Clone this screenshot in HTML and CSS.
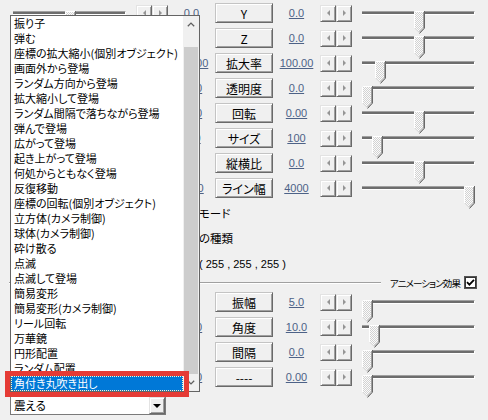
FILE: index.html
```html
<!DOCTYPE html>
<html lang="ja">
<head>
<meta charset="utf-8">
<title>設定ダイアログ</title>
<link rel="stylesheet" href="styles.css">
</head>
<body>
<svg class="defs" width="0" height="0" aria-hidden="true">
  <defs>
    <pattern id="dots" width="2" height="2" patternUnits="userSpaceOnUse">
      <rect width="2" height="2" fill="#fbfbfb"/>
      <rect width="1" height="1" fill="#d2d2d2"/>
      <rect x="1" y="1" width="1" height="1" fill="#d2d2d2"/>
    </pattern>
    <symbol id="th" viewBox="0 0 11 23">
      <polygon points="0,0 11,0 11,17 5.5,22.5 0,17" fill="url(#dots)"/>
      <polyline points="0.5,17.2 0.5,0.5 10,0.5" fill="none" stroke="#ffffff"/>
      <line x1="0.5" y1="17.2" x2="5.3" y2="22" stroke="#e3e3e3"/>
      <polyline points="9.5,1 9.5,17 5.5,21" fill="none" stroke="#a0a0a0"/>
      <polyline points="10.5,0 10.5,17.2 5.5,22.5" fill="none" stroke="#696969"/>
    </symbol>
  </defs>
</svg>

<div class="panel">
  <div class="row">
    <div class="slider"><div class="sl"><div class="track"></div><svg class="thumb" style="left:52px"><use href="#th"/></svg></div></div>
    <div class="arrows"><span class="ab"><i class="tri l"></i></span><span class="ab"><i class="tri r"></i></span></div>
    <span class="val">0.0</span>
    <button class="btn">Y</button>
    <span class="val">0.0</span>
    <div class="arrows"><span class="ab"><i class="tri l"></i></span><span class="ab"><i class="tri r"></i></span></div>
    <div class="slider r"><div class="sl"><div class="track"></div><svg class="thumb" style="left:52px"><use href="#th"/></svg></div></div>
  </div>
  <div class="row">
    <div class="slider"><div class="sl"><div class="track"></div><svg class="thumb" style="left:52px"><use href="#th"/></svg></div></div>
    <div class="arrows"><span class="ab"><i class="tri l"></i></span><span class="ab"><i class="tri r"></i></span></div>
    <span class="val">0.0</span>
    <button class="btn">Z</button>
    <span class="val">0.0</span>
    <div class="arrows"><span class="ab"><i class="tri l"></i></span><span class="ab"><i class="tri r"></i></span></div>
    <div class="slider r"><div class="sl"><div class="track"></div><svg class="thumb" style="left:52px"><use href="#th"/></svg></div></div>
  </div>
  <div class="row">
    <div class="slider"><div class="sl"><div class="track"></div><svg class="thumb" style="left:13px"><use href="#th"/></svg></div></div>
    <div class="arrows"><span class="ab"><i class="tri l"></i></span><span class="ab"><i class="tri r"></i></span></div>
    <span class="val">100.00</span>
    <button class="btn">拡大率</button>
    <span class="val">100.00</span>
    <div class="arrows"><span class="ab"><i class="tri l"></i></span><span class="ab"><i class="tri r"></i></span></div>
    <div class="slider r"><div class="sl"><div class="track"></div><svg class="thumb" style="left:13px"><use href="#th"/></svg></div></div>
  </div>
  <div class="row">
    <div class="slider"><div class="sl"><div class="track"></div><svg class="thumb" style="left:0px"><use href="#th"/></svg></div></div>
    <div class="arrows"><span class="ab"><i class="tri l"></i></span><span class="ab"><i class="tri r"></i></span></div>
    <span class="val">0.00</span>
    <button class="btn">透明度</button>
    <span class="val">0.0</span>
    <div class="arrows"><span class="ab"><i class="tri l"></i></span><span class="ab"><i class="tri r"></i></span></div>
    <div class="slider r"><div class="sl"><div class="track"></div><svg class="thumb" style="left:0px"><use href="#th"/></svg></div></div>
  </div>
  <div class="row">
    <div class="slider"><div class="sl"><div class="track"></div><svg class="thumb" style="left:52px"><use href="#th"/></svg></div></div>
    <div class="arrows"><span class="ab"><i class="tri l"></i></span><span class="ab"><i class="tri r"></i></span></div>
    <span class="val">0.00</span>
    <button class="btn">回転</button>
    <span class="val">0.00</span>
    <div class="arrows"><span class="ab"><i class="tri l"></i></span><span class="ab"><i class="tri r"></i></span></div>
    <div class="slider r"><div class="sl"><div class="track"></div><svg class="thumb" style="left:52px"><use href="#th"/></svg></div></div>
  </div>
  <div class="row">
    <div class="slider"><div class="sl"><div class="track"></div><svg class="thumb" style="left:10px"><use href="#th"/></svg></div></div>
    <div class="arrows"><span class="ab"><i class="tri l"></i></span><span class="ab"><i class="tri r"></i></span></div>
    <span class="val">100</span>
    <button class="btn">サイズ</button>
    <span class="val">100</span>
    <div class="arrows"><span class="ab"><i class="tri l"></i></span><span class="ab"><i class="tri r"></i></span></div>
    <div class="slider r"><div class="sl"><div class="track"></div><svg class="thumb" style="left:10px"><use href="#th"/></svg></div></div>
  </div>
  <div class="row">
    <div class="slider"><div class="sl"><div class="track"></div><svg class="thumb" style="left:52px"><use href="#th"/></svg></div></div>
    <div class="arrows"><span class="ab"><i class="tri l"></i></span><span class="ab"><i class="tri r"></i></span></div>
    <span class="val">0.0</span>
    <button class="btn">縦横比</button>
    <span class="val">0.0</span>
    <div class="arrows"><span class="ab"><i class="tri l"></i></span><span class="ab"><i class="tri r"></i></span></div>
    <div class="slider r"><div class="sl"><div class="track"></div><svg class="thumb" style="left:52px"><use href="#th"/></svg></div></div>
  </div>
  <div class="row">
    <div class="slider"><div class="sl"><div class="track"></div><svg class="thumb" style="left:102px"><use href="#th"/></svg></div></div>
    <div class="arrows"><span class="ab"><i class="tri l"></i></span><span class="ab"><i class="tri r"></i></span></div>
    <span class="val">4000</span>
    <button class="btn">ライン幅</button>
    <span class="val">4000</span>
    <div class="arrows"><span class="ab"><i class="tri l"></i></span><span class="ab"><i class="tri r"></i></span></div>
    <div class="slider r"><div class="sl"><div class="track"></div><svg class="thumb" style="left:102px"><use href="#th"/></svg></div></div>
  </div>

  <div class="trow"><span class="tx">合成モード</span></div>
  <div class="trow"><span class="tx">図形の種類</span></div>
  <div class="trow rgb"><span class="tx num">( 255 , 255 , 255 )</span></div>

  <div class="sep">
    <div class="sline"></div>
    <span class="slabel">アニメーション効果</span>
    <span class="chk"><svg width="9" height="9" viewBox="0 0 9 9"><path d="M1 4.2 L3.4 6.6 L8 1.8" fill="none" stroke="#000" stroke-width="1.8"/></svg></span>
  </div>

  <div class="row">
    <div class="slider"><div class="sl"><div class="track"></div><svg class="thumb" style="left:0px"><use href="#th"/></svg></div></div>
    <div class="arrows"><span class="ab"><i class="tri l"></i></span><span class="ab"><i class="tri r"></i></span></div>
    <span class="val">5.0</span>
    <button class="btn">振幅</button>
    <span class="val">5.0</span>
    <div class="arrows"><span class="ab"><i class="tri l"></i></span><span class="ab"><i class="tri r"></i></span></div>
    <div class="slider r"><div class="sl"><div class="track"></div><svg class="thumb" style="left:0px"><use href="#th"/></svg></div></div>
  </div>
  <div class="row">
    <div class="slider"><div class="sl"><div class="track"></div><svg class="thumb" style="left:7px"><use href="#th"/></svg></div></div>
    <div class="arrows"><span class="ab"><i class="tri l"></i></span><span class="ab"><i class="tri r"></i></span></div>
    <span class="val">0.00</span>
    <button class="btn">角度</button>
    <span class="val">10.0</span>
    <div class="arrows"><span class="ab"><i class="tri l"></i></span><span class="ab"><i class="tri r"></i></span></div>
    <div class="slider r"><div class="sl"><div class="track"></div><svg class="thumb" style="left:7px"><use href="#th"/></svg></div></div>
  </div>
  <div class="row">
    <div class="slider"><div class="sl"><div class="track"></div><svg class="thumb" style="left:0px"><use href="#th"/></svg></div></div>
    <div class="arrows"><span class="ab"><i class="tri l"></i></span><span class="ab"><i class="tri r"></i></span></div>
    <span class="val">0.0</span>
    <button class="btn">間隔</button>
    <span class="val">0.0</span>
    <div class="arrows"><span class="ab"><i class="tri l"></i></span><span class="ab"><i class="tri r"></i></span></div>
    <div class="slider r"><div class="sl"><div class="track"></div><svg class="thumb" style="left:0px"><use href="#th"/></svg></div></div>
  </div>
  <div class="row">
    <div class="slider"><div class="sl"><div class="track"></div><svg class="thumb" style="left:0px"><use href="#th"/></svg></div></div>
    <div class="arrows"><span class="ab"><i class="tri l"></i></span><span class="ab"><i class="tri r"></i></span></div>
    <span class="val">0.00</span>
    <button class="btn">----</button>
    <span class="val">0.00</span>
    <div class="arrows"><span class="ab"><i class="tri l"></i></span><span class="ab"><i class="tri r"></i></span></div>
    <div class="slider r"><div class="sl"><div class="track"></div><svg class="thumb" style="left:0px"><use href="#th"/></svg></div></div>
  </div>
</div>

<div class="dropdown">
  <div class="list">
    <div class="items">
      <div class="item">振り子</div>
      <div class="item">弾む</div>
      <div class="item">座標の拡大縮小(個別オブジェクト)</div>
      <div class="item">画面外から登場</div>
      <div class="item">ランダム方向から登場</div>
      <div class="item">拡大縮小して登場</div>
      <div class="item">ランダム間隔で落ちながら登場</div>
      <div class="item">弾んで登場</div>
      <div class="item">広がって登場</div>
      <div class="item">起き上がって登場</div>
      <div class="item">何処からともなく登場</div>
      <div class="item">反復移動</div>
      <div class="item">座標の回転(個別オブジェクト)</div>
      <div class="item">立方体(カメラ制御)</div>
      <div class="item">球体(カメラ制御)</div>
      <div class="item">砕け散る</div>
      <div class="item">点滅</div>
      <div class="item">点滅して登場</div>
      <div class="item">簡易変形</div>
      <div class="item">簡易変形(カメラ制御)</div>
      <div class="item">リール回転</div>
      <div class="item">万華鏡</div>
      <div class="item">円形配置</div>
      <div class="item">ランダム配置</div>
      <div class="item sel">角付き丸吹き出し</div>
    </div>
    <div class="sb">
      <div class="sbb"><svg width="8" height="5" viewBox="0 0 8 5"><path d="M0.8 4.3 L4 1.1 L7.2 4.3" fill="none" stroke="#606060" stroke-width="1.3"/></svg></div>
      <div class="sbthumb"></div>
      <div class="sbb"><svg width="8" height="5" viewBox="0 0 8 5"><path d="M0.8 0.7 L4 3.9 L7.2 0.7" fill="none" stroke="#606060" stroke-width="1.3"/></svg></div>
    </div>
  </div>
  <div class="combo">
    <span class="ctext">震える</span>
    <span class="cbtn"><i class="down"></i></span>
  </div>
</div>

<div class="mark"></div>
</body>
</html>
```

FILE: styles.css
```css
* { box-sizing: border-box; }
html, body { margin: 0; padding: 0; }
body {
  width: 488px;
  height: 420px;
  overflow: hidden;
  background: #f0f0f0;
  position: relative;
  font-family: "Noto Sans CJK JP", sans-serif;
  font-feature-settings: "palt";
  color: #000;
}
.defs { display: block; width: 0; height: 0; overflow: hidden; }

.panel {
  display: flex;
  flex-direction: column;
  gap: 5px;
  padding-top: 3px;
}
.row {
  display: grid;
  grid-template-columns: 123px 32px 47px 58px 47px 32px 123px;
  padding: 0 13px;
  height: 20px;
  align-items: center;
}
.slider { padding-right: 10px; height: 20px; align-self: start; }
.slider.r { padding: 0 0 0 10px; }
.sl { position: relative; height: 20px; }
.track {
  margin-top: 8px;
  height: 4px;
  background: #6d6d6d;
  border-top: 1px solid #a0a0a0;
  border-bottom: 1px solid #ffffff;
  border-right: 1px solid #ffffff;
}
.thumb { position: absolute; top: 0; width: 11px; height: 23px; }

.arrows { display: flex; height: 17px; }
.ab {
  width: 16px;
  height: 17px;
  background: #f0f0f0;
  border: 1px solid;
  border-color: #e3e3e3 #696969 #696969 #e3e3e3;
  box-shadow: inset 1px 1px #ffffff, inset -1px -1px #a0a0a0;
  display: flex;
  align-items: center;
  justify-content: center;
}
.tri { width: 0; height: 0; border-top: 3.5px solid transparent; border-bottom: 3.5px solid transparent; }
.tri.l { border-right: 3.5px solid #959595; }
.tri.r { border-left: 3.5px solid #959595; }

.val {
  font: 11px "Liberation Sans", Arial, sans-serif;
  color: #4d6287;
  text-decoration: underline;
  text-align: center;
  white-space: nowrap;
}
.btn {
  width: 58px;
  height: 20px;
  padding: 0;
  margin: 0;
  background: #f0f0f0;
  border: 1px solid;
  border-color: #c4c4c4 #696969 #696969 #c4c4c4;
  box-shadow: inset 1px 1px #ffffff, inset -1px -1px #a0a0a0;
  font: 12px/17px "Noto Sans CJK JP", sans-serif;
  font-feature-settings: "palt";
  color: #000;
}

.trow {
  height: 20px;
  padding-left: 176px;
  font-size: 11.5px;
  line-height: 20px;
  white-space: nowrap;
}
.trow.rgb { padding-left: 199px; }
.num { font: 11px "Liberation Sans", Arial, sans-serif; }

.sep {
  height: 9px;
  display: flex;
  align-items: center;
  padding: 0 11px 0 9px;
}
.sline {
  flex: 1;
  height: 2px;
  border-top: 1px solid #a0a0a0;
  border-bottom: 1px solid #ffffff;
}
.slabel {
  margin-left: 9px;
  font-size: 9.5px;
  letter-spacing: -0.9px;
  line-height: 12px;
  white-space: nowrap;
}
.chk {
  margin-left: 4px;
  width: 13px;
  height: 13px;
  flex: none;
  background: #ffffff;
  border: 1px solid #555555;
  box-shadow: inset 0 0 0 1px #333333;
  display: flex;
  align-items: center;
  justify-content: center;
}
.chk svg { display: block; }

.dropdown {
  position: absolute;
  left: 10px;
  top: 15px;
  display: flex;
  flex-direction: column;
  gap: 4px;
}
.list {
  width: 190px;
  height: 377px;
  border: 1px solid #646464;
  background: #ffffff;
  display: flex;
}
.items {
  flex: 1;
  font-size: 11px;
  line-height: 15px;
  overflow: hidden;
}
.item {
  height: 15px;
  padding-left: 3px;
  white-space: nowrap;
  overflow: hidden;
}
.item.sel {
  background: #0078d7;
  color: #ffffff;
  outline: 1px dotted #fff6c8;
  outline-offset: -1px;
}
.sb {
  width: 16px;
  display: flex;
  flex-direction: column;
  background: #f0f0f0;
}
.sbb {
  height: 17px;
  flex: none;
  display: flex;
  align-items: center;
  justify-content: center;
}
.sbthumb {
  flex: 1;
  margin: 14px 1px 0;
  background: #cdcdcd;
}

.combo {
  width: 156px;
  height: 19px;
  background: #ffffff;
  border: 1px solid #7a7a7a;
  display: flex;
  align-items: center;
}
.ctext { padding-left: 3px; font-size: 11.5px; line-height: 17px; }
.cbtn {
  margin-left: auto;
  width: 16px;
  height: 17px;
  background: #f0f0f0;
  border: 1px solid;
  border-color: #e3e3e3 #696969 #696969 #e3e3e3;
  box-shadow: inset 1px 1px #ffffff, inset -1px -1px #a0a0a0;
  display: flex;
  align-items: center;
  justify-content: center;
}
.down {
  width: 0;
  height: 0;
  border-left: 4px solid transparent;
  border-right: 4px solid transparent;
  border-top: 4px solid #000000;
}

.mark {
  position: absolute;
  left: 5px;
  top: 371px;
  width: 184px;
  height: 26px;
  border: 5px solid #e53b35;
}
```
